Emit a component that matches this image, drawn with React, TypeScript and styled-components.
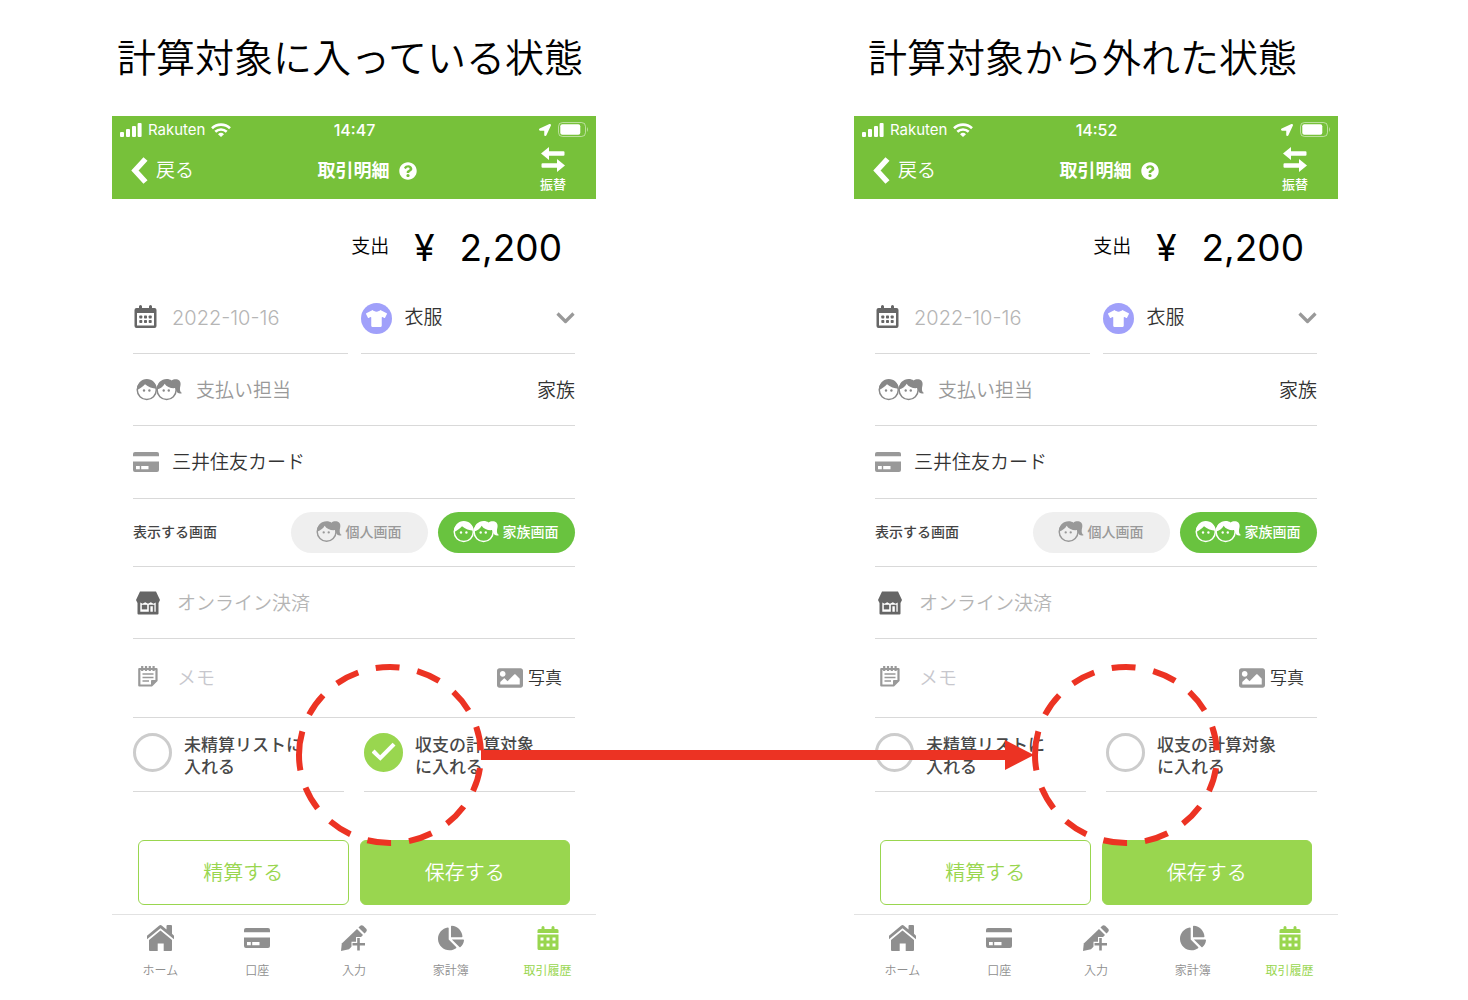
import React, { useId, useState } from "react";
import styled, { createGlobalStyle } from "styled-components";
import { FaChartPie, FaImage, FaLocationArrow, FaQuestionCircle, FaTshirt } from "react-icons/fa";

const GlobalStyle = createGlobalStyle`
  *, *::before, *::after { box-sizing: border-box; }
  body {
    margin: 0;
    background: #fff;
    color: #000;
    font-family: Inter, "Noto Sans CJK JP", sans-serif;
    font-weight: 350;
  }
  button, input, select { font: inherit; color: inherit; }
  button { cursor: pointer; }
  svg { display: block; flex: none; }
`;

const LINE = "#d9d9d9";
const LIME = "#99d64f";

const Board = styled.main`
  position: relative;
  display: grid;
  grid-template-columns: 1fr 1fr;
  column-gap: 258px;
  padding: 26px 130px 0 112px;
`;

const Title = styled.h1<{ $inset: number }>`
  margin: 0;
  padding: 2px 0 28px ${(p) => p.$inset}px;
  font-size: 39px;
  line-height: 60px;
  font-weight: 350;
  white-space: nowrap;
`;

const Header = styled.header`
  background: #77c13a;
  color: #fff;
`;

const StatusBar = styled.div`
  display: grid;
  grid-template-columns: 1fr auto 1fr;
  align-items: center;
  height: 26px;
  padding: 1px 7px 0 8px;
  font-size: 15px;
  line-height: 20px;
  font-weight: 400;
`;

const StatusGroup = styled.div<{ $end?: boolean }>`
  display: flex;
  align-items: center;
  justify-content: ${(p) => (p.$end ? "flex-end" : "flex-start")};
  gap: ${(p) => (p.$end ? 7 : 6)}px;
`;

const Clock = styled.time`
  font-size: 16px;
  font-weight: 500;
`;

const NavBar = styled.div`
  display: grid;
  grid-template-columns: 1fr auto 1fr;
  align-items: center;
  height: 57px;
  padding: 0 30px 0 19px;
`;

const BackLink = styled.a`
  display: flex;
  align-items: center;
  gap: 8px;
  color: #fff;
  font-size: 19px;
  line-height: 28px;
  text-decoration: none;
`;

const ScreenTitle = styled.h2`
  display: flex;
  align-items: center;
  gap: 9px;
  margin: 0;
  padding-left: 37px;
  font-size: 18px;
  line-height: 28px;
  font-weight: 600;
`;

const SwapButton = styled.button`
  justify-self: end;
  display: flex;
  flex-direction: column;
  align-items: center;
  gap: 3px;
  padding: 0 0 2px;
  border: 0;
  background: none;
  font-size: 13px;
  line-height: 18px;
  font-weight: 500;
`;

const Form = styled.form`
  padding: 0 21px;
`;

const Amount = styled.div`
  display: flex;
  align-items: center;
  justify-content: flex-end;
  height: 82px;
  padding: 16px 13px 0 0;
  font-size: 19px;
  line-height: 28px;
`;

const AmountLabel = styled.span`
  padding-bottom: 2px;
`;

const Figure = styled.span`
  margin-left: 25px;
  font-size: 37px;
  line-height: 50px;
  font-weight: 400;
`;

const Columns = styled.div<{ $gap: number }>`
  display: grid;
  grid-template-columns: 1fr 1fr;
  column-gap: ${(p) => p.$gap}px;
`;

const Row = styled.div<{ $height: number }>`
  display: flex;
  align-items: center;
  min-width: 0;
  height: ${(p) => p.$height}px;
  padding-top: 2px;
  border-bottom: 1px solid ${LINE};
  color: #333;
  font-size: 19px;
  line-height: 28px;
`;

const ScopeRow = styled(Row)`
  padding: 0 0 1px;
`;

const IconSlot = styled.span<{ $width: number; $inset?: number; $color: string }>`
  flex: none;
  width: ${(p) => p.$width}px;
  padding: 0 0 2px ${(p) => p.$inset ?? 0}px;
  color: ${(p) => p.$color};
`;

const TextField = styled.input`
  flex: 1;
  min-width: 0;
  padding: 0;
  border: 0;
  outline: 0;
  background: none;
  color: #b5b5b5;
  &::placeholder { color: #b5b5b5; opacity: 1; }
`;

const DateField = styled(TextField)`
  font-size: 20px;
`;

const MemoField = styled(TextField)`
  &::placeholder { color: #c7c7cd; }
`;

const RoundBadge = styled.span`
  display: grid;
  place-items: center;
  flex: none;
  width: 31px;
  height: 31px;
  margin-right: 13px;
  border-radius: 50%;
  background: #a0a0fa;
  color: #fff;
`;

const Picker = styled.select`
  flex: 1;
  min-width: 0;
  padding: 0;
  border: 0;
  background: none;
  appearance: none;
`;

const Muted = styled.span`
  flex: 1;
  color: #999;
`;

const Caption = styled.span`
  flex: 1;
  padding-bottom: 1px;
  color: #444;
  font-size: 14px;
  font-weight: 500;
`;

const Pill = styled.button<{ $active: boolean }>`
  display: flex;
  align-items: center;
  justify-content: center;
  gap: 4px;
  width: 137px;
  height: 41px;
  margin-left: 10px;
  padding: 0 2px 1px 0;
  border: 0;
  border-radius: 21px;
  background: ${(p) => (p.$active ? "#69c33f" : "#efefef")};
  color: ${(p) => (p.$active ? "#fff" : "#999")};
  font-size: 14px;
  line-height: 20px;
  font-weight: 500;
`;

const PhotoButton = styled.button`
  display: flex;
  align-items: center;
  gap: 5px;
  margin-right: 13px;
  padding: 0 0 2px;
  border: 0;
  background: none;
  font-size: 17px;
  line-height: 28px;
  svg { color: #999; }
`;

const CheckLabel = styled.label`
  display: flex;
  align-items: center;
  gap: 12px;
  height: 74px;
  padding-bottom: 5px;
  border-bottom: 1px solid ${LINE};
  color: #484848;
  font-size: 17px;
  line-height: 22px;
  font-weight: 500;
  white-space: nowrap;
`;

const CheckText = styled.span`
  padding-top: 8px;
`;

const CheckBox = styled.input`
  appearance: none;
  display: grid;
  place-items: center;
  flex: none;
  width: 39px;
  height: 39px;
  margin: 0;
  border: 3px solid #ccc;
  border-radius: 50%;
  background: #fff;
  &:checked { border-color: ${LIME}; background: ${LIME}; }
  &:checked::after {
    content: "";
    width: 24px;
    height: 20px;
    background: #fff;
    clip-path: polygon(0 52%, 13% 38%, 36% 66%, 88% 4%, 100% 17%, 37% 94%);
  }
`;

const Actions = styled.div`
  display: grid;
  grid-template-columns: 1fr 1fr;
  column-gap: 11px;
  padding: 48px 5px 9px;
`;

const ActionButton = styled.button<{ $solid?: boolean }>`
  height: 65px;
  padding: 1px 0 0;
  border: 1px solid ${LIME};
  border-radius: 6px;
  background: ${(p) => (p.$solid ? LIME : "#fff")};
  color: ${(p) => (p.$solid ? "#fff" : LIME)};
  font-size: 20px;
  line-height: 30px;
`;

const TabBar = styled.nav`
  display: grid;
  grid-template-columns: repeat(5, 1fr);
  border-top: 1px solid #e2e2e2;
`;

const Tab = styled.a<{ $active?: boolean }>`
  display: flex;
  flex-direction: column;
  align-items: center;
  gap: 10px;
  padding-top: 10px;
  color: ${(p) => (p.$active ? LIME : "#8f8f8f")};
  font-size: 12px;
  line-height: 20px;
  font-weight: ${(p) => (p.$active ? 400 : 350)};
  text-decoration: none;
`;

const Annotation = styled.svg`
  position: absolute;
  top: 655px;
  left: 0;
  width: 100%;
  pointer-events: none;
`;

const SignalIcon = () => (
  <svg width="22" height="14" viewBox="0 0 22 14" fill="currentColor">
    <rect x="0" y="9" width="4" height="5" rx="1" />
    <rect x="6" y="6" width="4" height="8" rx="1" />
    <rect x="12" y="3" width="4" height="11" rx="1" />
    <rect x="17.6" y="0" width="4" height="14" rx="1" />
  </svg>
);

const WifiIcon = () => (
  <svg width="20" height="14" viewBox="0 0 20 14" fill="none" stroke="currentColor" strokeWidth="2.6">
    <path d="M1 5.2a13 13 0 0 1 18 0" />
    <path d="M4.3 8.7a8.4 8.4 0 0 1 11.4 0" />
    <path d="M7 11.2a4.4 4.4 0 0 1 6 0L10 14z" fill="currentColor" stroke="none" />
  </svg>
);

const BatteryIcon = () => (
  <svg width="31" height="15" viewBox="0 0 31 15">
    <rect x=".5" y=".5" width="27" height="14" rx="4" fill="none" stroke="#fff" strokeOpacity=".5" />
    <rect x="2.3" y="2.3" width="20" height="10.4" rx="2" fill="#fff" />
    <path d="M29 5v5q2-2.500 0-5z" fill="#fff" fillOpacity=".5" />
  </svg>
);

const BackIcon = () => (
  <svg width="17" height="27" viewBox="0 0 17 27" fill="none" stroke="currentColor" strokeWidth="5.500">
    <path d="M14.500 2 4 13.500 14.500 25" />
  </svg>
);

const SwapIcon = () => (
  <svg width="24" height="25" viewBox="0 0 24 25" fill="currentColor">
    <path d="M0 6.500 8 0v4.300h14.500a1 1 0 0 1 1 1v2.400a1 1 0 0 1-1 1H8V13z" />
    <path d="M24 18.500 16 12v4.300H1.500a1 1 0 0 0-1 1v2.400a1 1 0 0 0 1 1H16V25z" />
  </svg>
);

const CalendarIcon = () => (
  <svg width="23" height="24" viewBox="0 0 23 24" fill="currentColor">
    <path d="M5 1.500a1.500 1.500 0 0 1 3 0V3h7V1.500a1.500 1.500 0 0 1 3 0V3h2.500a2 2 0 0 1 2 2v16a2 2 0 0 1-2 2h-18a2 2 0 0 1-2-2V5a2 2 0 0 1 2-2H5zM3 8v12.500h17V8z" fillRule="evenodd" />
    {[5.3, 10, 14.7].map((x) => (
      <React.Fragment key={x}>
        <rect x={x} y="10.500" width="3" height="3" rx=".7" />
        <rect x={x} y="15" width="3" height="3" rx=".7" />
      </React.Fragment>
    ))}
  </svg>
);

const TabCalendarIcon = () => (
  <svg width="22" height="26" viewBox="0 0 22 26" fill="currentColor">
    <path d="M4.500 2.500a1.200 1.200 0 0 1 3 0V4h7V2.500a1.200 1.200 0 0 1 3 0V4H20a1.500 1.500 0 0 1 1.500 1.500V8H.5V5.500A1.500 1.500 0 0 1 2 4h2.500z" />
    <path
      fillRule="evenodd"
      d="M.5 9.500h21v14A1.500 1.500 0 0 1 20 25H2a1.500 1.500 0 0 1-1.500-1.500zM3.500 12.500v3h3v-3zm6 0v3h3v-3zm6 0v3h3v-3zm-12 6v3h3v-3zm6 0v3h3v-3zm6 0v3h3v-3z"
    />
  </svg>
);

const CardIcon = ({ box = 20 }: { box?: number }) => (
  <svg width="26" height={box} viewBox={`0 ${(20 - box) / 2} 26 ${box}`} fill="currentColor">
    <path d="M0 4.300V2a2 2 0 0 1 2-2h22a2 2 0 0 1 2 2v2.300z" />
    <path fillRule="evenodd" d="M0 9.500h26V18a2 2 0 0 1-2 2H2a2 2 0 0 1-2-2zM3 14v3.200h3.800V14zm5.200 0v3.200h7.300V14z" />
  </svg>
);

const Girl = ({ x = 0 }: { x?: number }) => (
  <g transform={`translate(${x} 0)`}>
    <circle cx="11" cy="12" r="9.700" fill="none" stroke="currentColor" strokeWidth="1.500" />
    <path d="M.8 11.500C1.200 5 5.500.8 11 .8c2.200 0 3.800.6 5 1.500 2-1.700 6-1.900 8-.1 2 2 1.200 5 .7 7.300-.4 3 .2 4.800 2 5.600-2 1.200-5.300.4-6-2.800-.2-1-.2-1.800-.8-2.300-4 .6-8.900-1-10.900-4.500C7.500 8.500 4.500 10.500.8 11.500z" />
    <circle cx="8" cy="12.500" r="1.200" />
    <circle cx="13.200" cy="12.500" r="1.200" />
  </g>
);

const PersonIcon = () => (
  <svg width="26" height="23" viewBox="0 0 27 23" fill="currentColor">
    <Girl />
  </svg>
);

const FamilyIcon = () => (
  <svg width="46" height="23" viewBox="0 0 47 23" fill="currentColor">
    <circle cx="11" cy="12" r="9.700" fill="none" stroke="currentColor" strokeWidth="1.500" />
    <path d="M.8 12C1 5.500 5.500.8 11 .8S21 5 21.200 10.800C16.500 10.500 12.500 9 9.200 6.200 7 8.800 4 10.800.8 12z" />
    <circle cx="8.200" cy="12.500" r="1.200" />
    <circle cx="13.700" cy="12.500" r="1.200" />
    <Girl x={20.3} />
  </svg>
);

const ShopIcon = () => (
  <svg width="24" height="24" viewBox="0 0 24 24" fill="currentColor">
    <path
      fillRule="evenodd"
      d="M4 .5h16L24 9l-1.500 3V22.500a1 1 0 0 1-1 1h-19a1 1 0 0 1-1-1V12L0 9zM4.300 11.500v9.300h15.400v-9.300l-2.200 1.300-2.700-1.600-2.800 1.600-2.800-1.600-2.700 1.600z"
    />
    <rect x="5.800" y="13.800" width="5.400" height="4.600" />
    <path d="M13.600 21.500v-7h4v7" fill="none" stroke="currentColor" strokeWidth="1.600" />
  </svg>
);

const MemoIcon = () => (
  <svg width="20" height="24" viewBox="0 0 20 24" fill="none" stroke="currentColor" strokeWidth="2.200">
    <path d="M1.300 3h17.200v11.500l-5 5H1.300z" strokeLinejoin="round" />
    <path d="M13.500 19v-4.500H18z" fill="currentColor" strokeWidth="1" />
    <path d="M4.200 0v5M8 0v5M11.800 0v5M15.600 0v5" />
    <path d="M4.500 8h11M4.500 11.500h11M4.500 15h6.500" strokeWidth="1.700" />
  </svg>
);

const ChevronIcon = () => (
  <svg width="19" height="12" viewBox="0 0 19 12" fill="none" stroke="#999" strokeWidth="3.200">
    <path d="m1.500 1.500 8 8 8-8" strokeLinejoin="round" />
  </svg>
);

const HomeIcon = () => (
  <svg width="27" height="26" viewBox="0 0 27 26" fill="currentColor">
    <path d="M19.500 1a1 1 0 0 1 1-1H24a1 1 0 0 1 1 1v7.800l2 1.900v3.600L13.500 3.200 0 14.300v-3.600L12 .8a2.200 2.200 0 0 1 3 0l4.500 3.800z" />
    <path d="M13.500 5.500 25 15v10a1 1 0 0 1-1 1h-7.300v-7.500h-6V26H3a1 1 0 0 1-1-1V15z" />
  </svg>
);

const PencilPlusIcon = () => (
  <svg width="26" height="26" viewBox="0 0 26 26" fill="currentColor">
    <path d="M17.500 2.500 19 1q1.500-1.500 3.200-.2l3 3q1.300 1.700-.2 3.200l-1.500 1.500z" />
    <path d="M16 4 22 10 8 24.200 0 26l.8-7.500z" />
    <path d="M17.500 12v14M10.500 19.300h14.500" stroke="#fff" strokeWidth="5" />
    <path d="M17.500 13v12.500M11.500 19.300h12.500" stroke="currentColor" strokeWidth="2.600" />
  </svg>
);

/* Two dashed rings joined by an arrow, drawn above both screens. */
const Callout = () => (
  <Annotation viewBox="0 0 1468 200" fill="none" stroke="#ec3323" aria-hidden="true">
    {[299, 1035].map((x) => (
      <path
        key={x}
        d={`M${x} 100a91 88 0 0 1 182 0a91 88 0 0 1-182 0`}
        strokeWidth="6"
        strokeDasharray="24 18"
      />
    ))}
    <path d="M481 100h526" strokeWidth="10" />
    <path d="M1005 85v30l29-15z" fill="#ec3323" stroke="none" />
  </Annotation>
);

type PhoneProps = { time: string; included: boolean };

function Phone({ time, included }: PhoneProps) {
  const id = useId();
  const [scope, setScope] = useState<"personal" | "family">("family");
  return (
    <>
      <Header>
        <StatusBar>
          <StatusGroup>
            <SignalIcon />
            Rakuten
            <WifiIcon />
          </StatusGroup>
          <Clock>{time}</Clock>
          <StatusGroup $end>
            <FaLocationArrow size={12} />
            <BatteryIcon />
          </StatusGroup>
        </StatusBar>
        <NavBar>
          <BackLink href="#back">
            <BackIcon />
            戻る
          </BackLink>
          <ScreenTitle>
            取引明細
            <FaQuestionCircle size={18} />
          </ScreenTitle>
          <SwapButton type="button">
            <SwapIcon />
            振替
          </SwapButton>
        </NavBar>
      </Header>

      <Form onSubmit={(e) => e.preventDefault()}>
        <Amount>
          <AmountLabel>支出</AmountLabel>
          <Figure>¥</Figure>
          <Figure>2,200</Figure>
        </Amount>
        <Columns $gap={13}>
          <Row $height={73}>
            <IconSlot $width={39} $inset={1} $color="#666"><CalendarIcon /></IconSlot>
            <DateField aria-label="日付" defaultValue="2022-10-16" />
          </Row>
          <Row $height={73}>
            <RoundBadge><FaTshirt size={21} /></RoundBadge>
            <Picker aria-label="カテゴリ">
              <option>衣服</option>
            </Picker>
            <ChevronIcon />
          </Row>
        </Columns>
        <Row $height={72}>
          <IconSlot $width={63} $inset={3} $color="#888"><FamilyIcon /></IconSlot>
          <Muted>支払い担当</Muted>
          家族
        </Row>
        <Row $height={73}>
          <IconSlot $width={39} $color="#999"><CardIcon /></IconSlot>
          三井住友カード
        </Row>
        <ScopeRow $height={68}>
          <Caption>表示する画面</Caption>
          <Pill type="button" $active={scope === "personal"} aria-pressed={scope === "personal"} onClick={() => setScope("personal")}>
            <PersonIcon />
            個人画面
          </Pill>
          <Pill type="button" $active={scope === "family"} aria-pressed={scope === "family"} onClick={() => setScope("family")}>
            <FamilyIcon />
            家族画面
          </Pill>
        </ScopeRow>
        <Row $height={72}>
          <IconSlot $width={44} $inset={3} $color="#666"><ShopIcon /></IconSlot>
          <TextField aria-label="店舗" placeholder="オンライン決済" />
        </Row>
        <Row $height={79}>
          <IconSlot $width={44} $inset={5} $color="#999"><MemoIcon /></IconSlot>
          <MemoField aria-label="メモ" placeholder="メモ" />
          <PhotoButton type="button">
            <FaImage size={26} />
            写真
          </PhotoButton>
        </Row>
        <Columns $gap={20}>
          <CheckLabel htmlFor={`${id}-unsettled`}>
            <CheckBox type="checkbox" id={`${id}-unsettled`} />
            <CheckText>未精算リストに<br />入れる</CheckText>
          </CheckLabel>
          <CheckLabel htmlFor={`${id}-balance`}>
            <CheckBox type="checkbox" id={`${id}-balance`} defaultChecked={included} />
            <CheckText>収支の計算対象<br />に入れる</CheckText>
          </CheckLabel>
        </Columns>
        <Actions>
          <ActionButton type="button">精算する</ActionButton>
          <ActionButton type="submit" $solid>保存する</ActionButton>
        </Actions>
      </Form>

      <TabBar>
        <Tab href="#home"><HomeIcon />ホーム</Tab>
        <Tab href="#accounts"><CardIcon box={26} />口座</Tab>
        <Tab href="#entry"><PencilPlusIcon />入力</Tab>
        <Tab href="#budget"><FaChartPie size={26} />家計簿</Tab>
        <Tab href="#history" $active><TabCalendarIcon />取引履歴</Tab>
      </TabBar>
    </>
  );
}

export default function App() {
  return (
    <>
      <GlobalStyle />
      <Board>
        <section>
          <Title $inset={5}>計算対象に入っている状態</Title>
          <Phone time="14:47" included />
        </section>
        <section>
          <Title $inset={14}>計算対象から外れた状態</Title>
          <Phone time="14:52" included={false} />
        </section>
        <Callout />
      </Board>
    </>
  );
}
